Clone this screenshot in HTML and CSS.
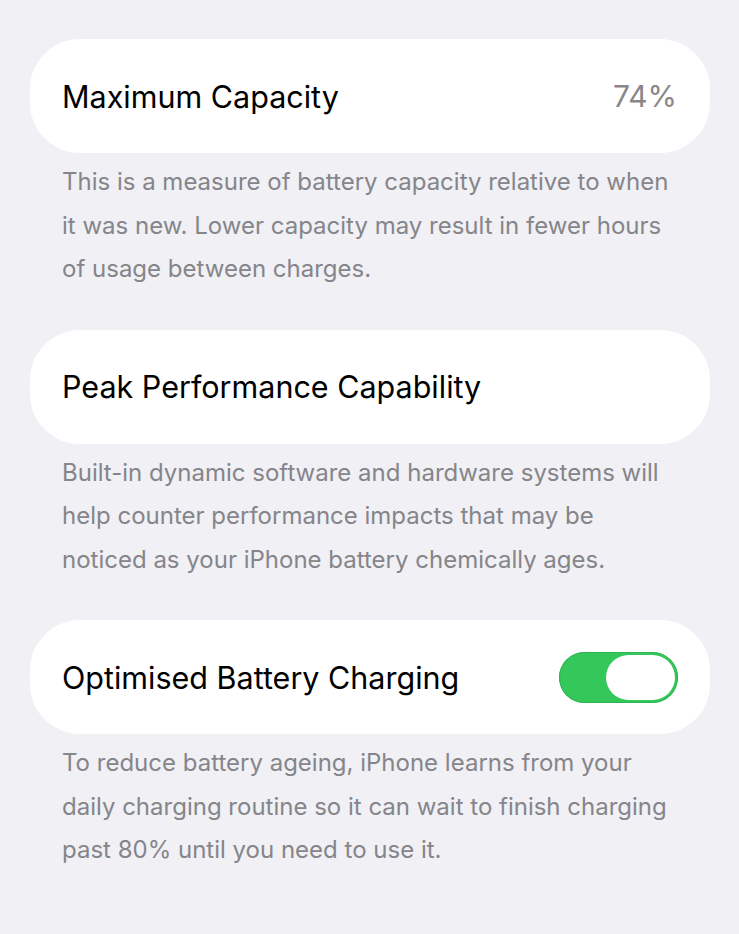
FILE: index.html
```html
<!DOCTYPE html>
<html lang="en">

<head>
    <meta charset="UTF-8">
    <meta name="viewport" content="width=device-width, initial-scale=1.0">
    <title>Battery Health</title>
    <link rel="stylesheet" href="styles.css">
</head>

<body>
    <main class="settings">
        <section class="group">
            <div class="cell">
                <span class="cell-title">Maximum Capacity</span>
                <span class="cell-value">74%</span>
            </div>
            <p class="footnote">This is a measure of battery capacity relative to when it was new. Lower capacity may result in fewer hours of usage between charges.</p>
        </section>

        <section class="group">
            <div class="cell">
                <span class="cell-title">Peak Performance Capability</span>
            </div>
            <p class="footnote">Built-in dynamic software and hardware systems will help counter performance impacts that may be noticed as your iPhone battery chemically ages.</p>
        </section>

        <section class="group">
            <div class="cell">
                <span class="cell-title">Optimised Battery Charging</span>
                <label class="switch">
                    <input type="checkbox" checked>
                    <span class="switch-track"><span class="switch-knob"></span></span>
                </label>
            </div>
            <p class="footnote">To reduce battery ageing, iPhone learns from your daily charging routine so it can wait to finish charging past 80% until you need to use it.</p>
        </section>
    </main>
</body>

</html>
```

FILE: styles.css
```css
body {
    margin: 0;
    background-color: #f0f0f5;
    font-family: Inter, "Noto Sans", sans-serif;
    color: #000;
}

.settings {
    padding: 39px 29px 0 30px;
}

.group {
    margin-bottom: 39px;
}

.cell {
    display: flex;
    justify-content: space-between;
    align-items: center;
    height: 114px;
    padding: 0 32px;
    background-color: #fff;
    border-radius: 50px;
    box-sizing: border-box;
}

.cell-title {
    font-size: 30.5px;
}

.cell-value {
    font-size: 30px;
    color: #87878b;
    margin-right: 1px;
}

.footnote {
    margin: 0;
    padding: 7px 32px 0;
    font-size: 24px;
    line-height: 43.5px;
    color: #85858a;
}

/* toggle switch */
.switch {
    display: block;
}

.switch input {
    display: none;
}

.switch-track {
    display: flex;
    justify-content: flex-end;
    align-items: center;
    width: 119px;
    height: 51px;
    padding: 3px;
    box-sizing: border-box;
    background-color: #34c759;
    border-radius: 26px;
    box-shadow: inset 0 0 0 1px #2fb552;
}

.switch-knob {
    width: 69px;
    height: 45px;
    background-color: #fff;
    border-radius: 23px;
}
```
